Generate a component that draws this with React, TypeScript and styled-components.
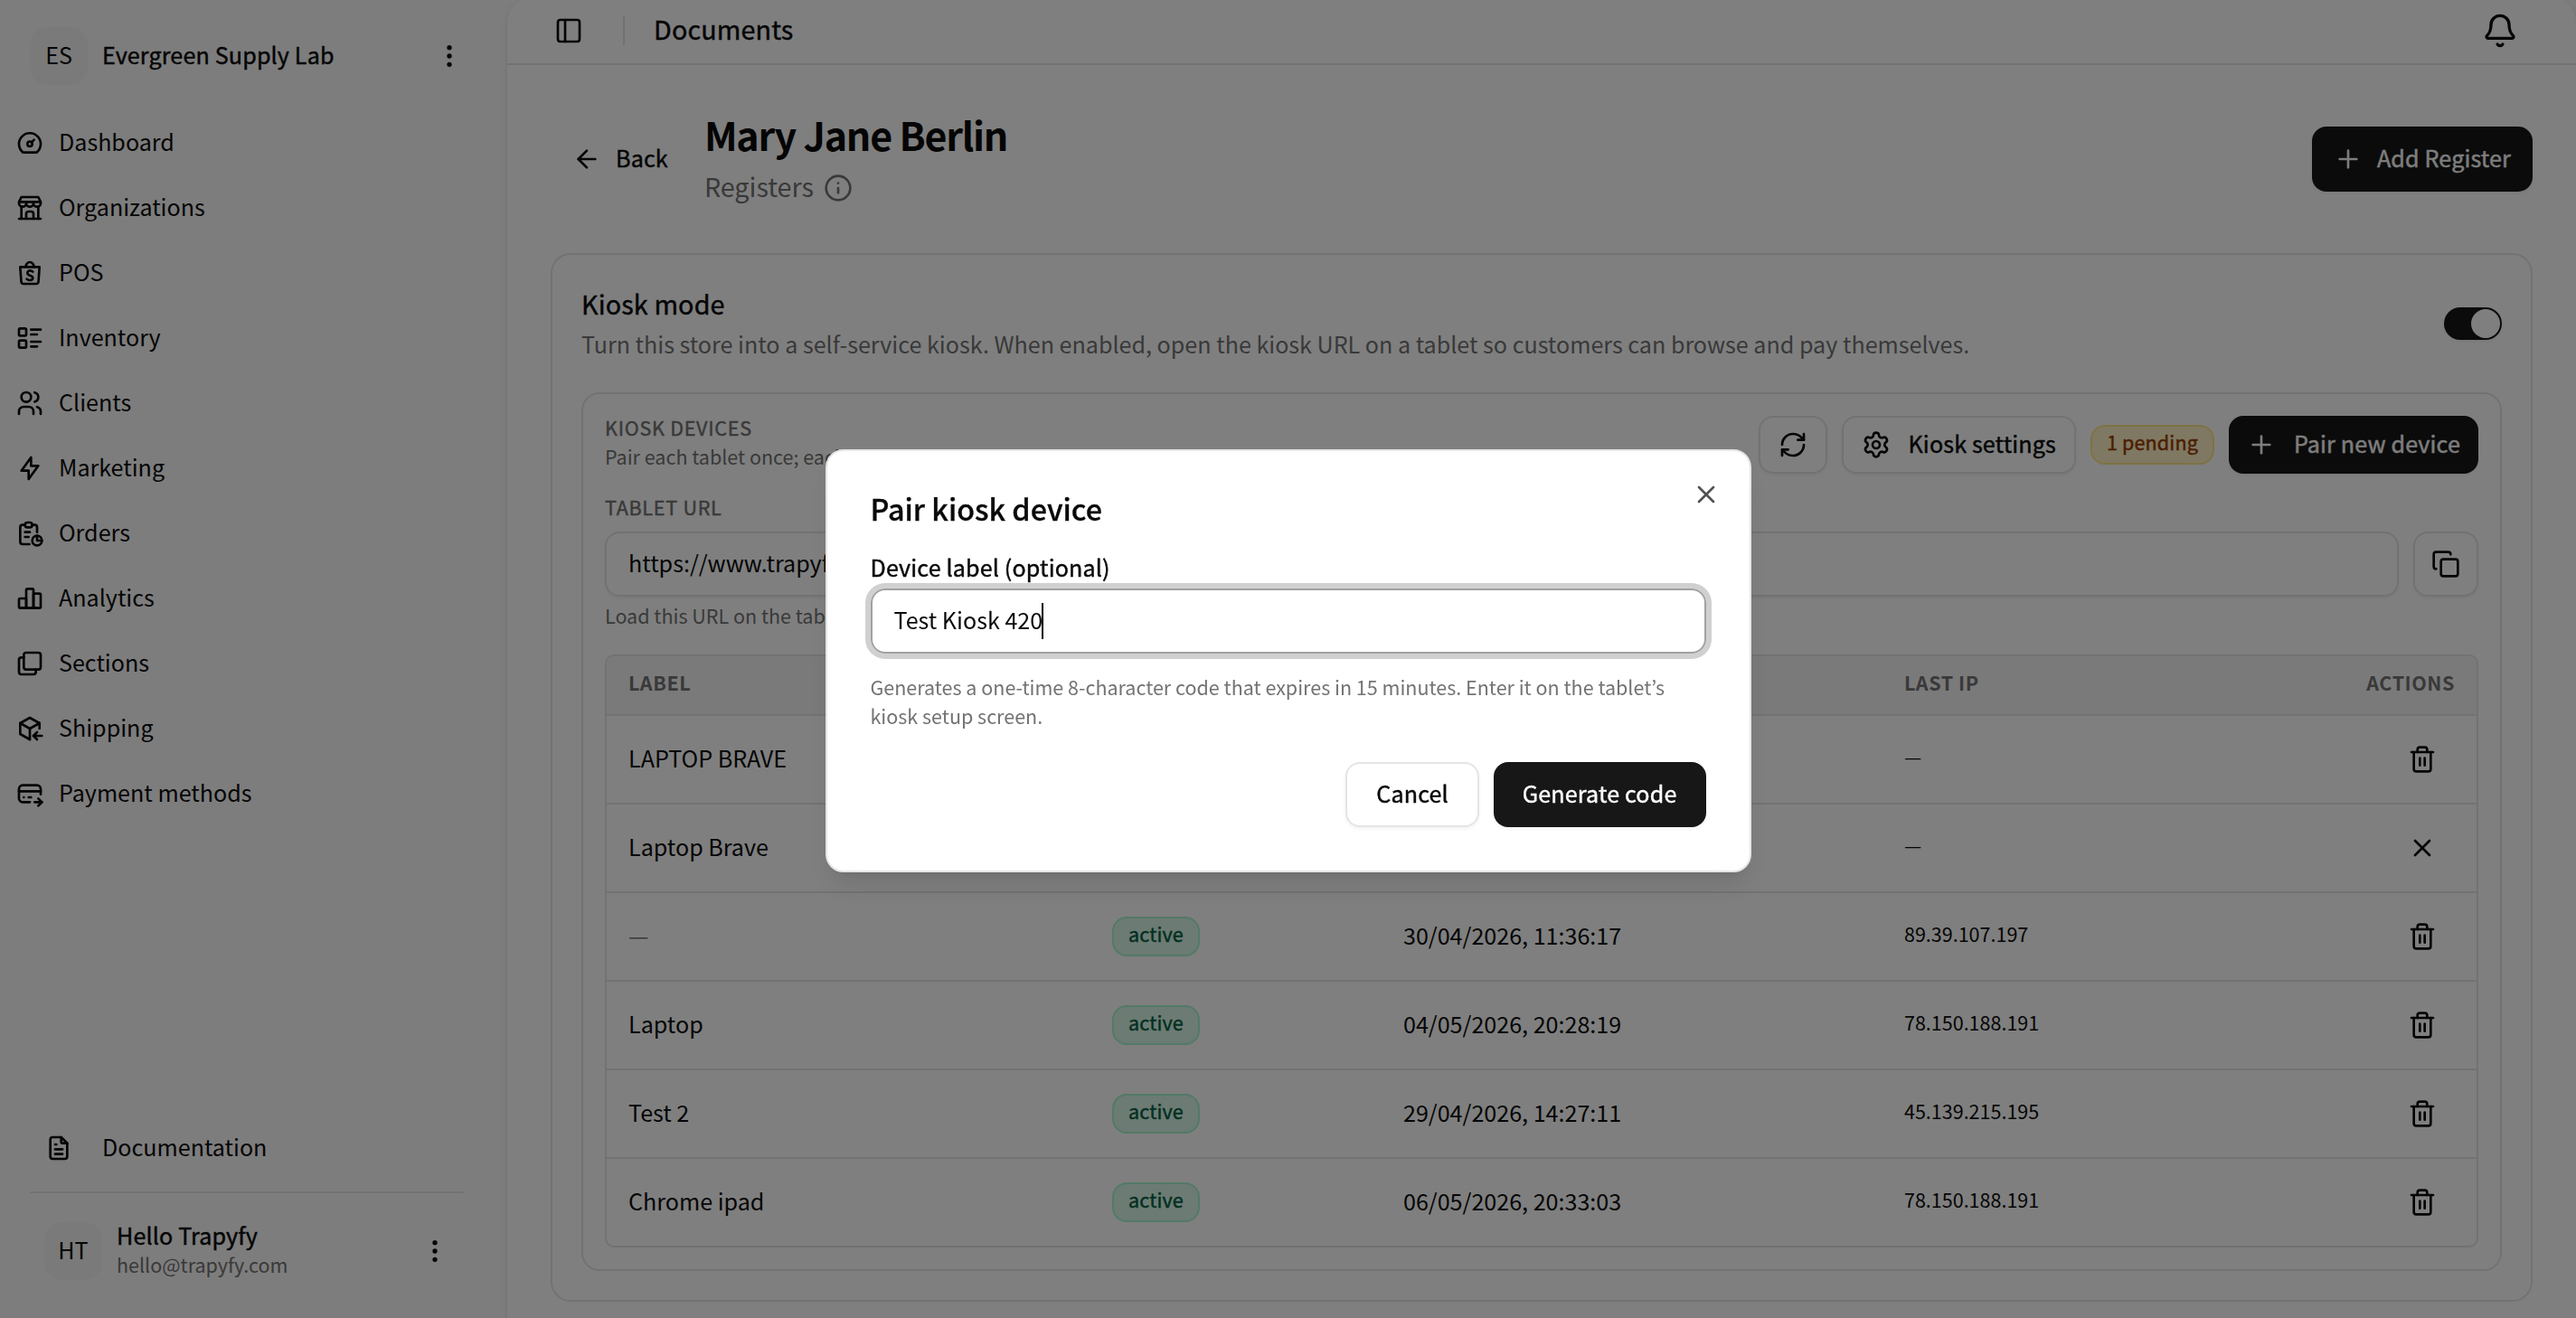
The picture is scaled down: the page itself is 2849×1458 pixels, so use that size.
import React from "react";
import styled, { createGlobalStyle, css } from "styled-components";
import {
  TbDashboard,
  TbBuildingStore,
  TbBrandShopee,
  TbListDetails,
  TbUsers,
  TbBolt,
  TbReport,
  TbChartBar,
  TbBoxMultiple,
  TbPackageImport,
  TbCreditCardPay,
  TbFileText,
} from "react-icons/tb";
import {
  ArrowLeft,
  Bell,
  Copy,
  EllipsisVertical,
  Info,
  PanelLeft,
  Plus,
  RefreshCw,
  Settings,
  Trash2,
  X,
} from "lucide-react";

const color = {
  ink: "#0a0a0a",
  muted: "#737373",
  line: "#e5e5e5",
  soft: "#f5f5f5",
  sidebar: "#fafafa",
  primary: "#171717",
  ring: "#a1a1a1",
};

const shadowXs = "0 2px 4px rgba(0, 0, 0, 0.05)";

const type = {
  xs: css`
    font-size: 21.5px;
    line-height: 26px;
    padding-bottom: 6px;
  `,
  sm: css`
    font-size: 25.1px;
    line-height: 36px;
    padding-bottom: 4px;
  `,
  base: css`
    font-size: 28.7px;
    line-height: 43px;
    padding-bottom: 5px;
  `,
};

const medium = css`
  font-weight: 400;
  letter-spacing: 0.15px;
  -webkit-text-stroke: 0.45px currentColor;
`;

const GlobalStyle = createGlobalStyle`
  *, *::before, *::after { box-sizing: border-box; }
  body {
    margin: 0;
    overflow: hidden;
    background: ${color.sidebar};
    color: ${color.ink};
    font-family: "Noto Sans CJK SC", "Open Sans", sans-serif;
  }
  button, input { font: inherit; color: inherit; }
  h1, h2, p { margin: 0; }
`;

const Shell = styled.div`
  display: flex;
  height: 1458px;
  width: 100%;
  overflow: hidden;
`;

/* Sidebar */
const Sidebar = styled.aside`
  width: 561px;
  flex: none;
  display: flex;
  flex-direction: column;
  padding: 30px 0 26px;
`;

const Workspace = styled.div`
  display: flex;
  align-items: center;
  gap: 16px;
  padding: 0 48px 0 33px;
  height: 64px;
`;

const Avatar = styled.div`
  width: 64px;
  height: 64px;
  flex: none;
  display: grid;
  place-items: center;
  border-radius: 20px;
  background: ${color.soft};
`;

const Label = styled.span<{ $medium?: boolean }>`
  ${type.sm}
  ${(p) => p.$medium && medium}
  white-space: nowrap;
`;

const Grow = styled.div`
  flex: 1;
  min-width: 0;
`;

const Nav = styled.nav`
  display: flex;
  flex-direction: column;
  gap: 8px;
  margin-top: 32px;
  padding: 0 16px;
`;

const NavItem = styled.a`
  display: flex;
  align-items: center;
  gap: 16px;
  height: 64px;
  padding-left: 1px;
  svg {
    width: 32px;
    height: 32px;
  }
`;

const SidebarFooter = styled.div`
  margin-top: auto;
  padding: 0 48px 0 33px;
`;

const DocsLink = styled.a`
  display: flex;
  align-items: center;
  gap: 32px;
  height: 64px;
  padding-left: 16px;
  svg {
    width: 32px;
    height: 32px;
  }
`;

const Separator = styled.hr`
  height: 2px;
  margin: 16px 0;
  border: 0;
  background: ${color.line};
`;

const UserRow = styled.div`
  display: flex;
  align-items: center;
  gap: 16px;
  height: 96px;
  padding: 0 16px;
`;

const UserName = styled.div`
  ${type.sm}
  ${medium}
  line-height: 31px;
`;

const UserMail = styled.div`
  ${type.xs}
  color: ${color.muted};
`;

/* Main panel */
const Panel = styled.main`
  flex: 1;
  min-width: 0;
  margin-top: -3px;
  border-radius: 28px 28px 0 0;
  background: #fff;
  box-shadow: 0 2px 6px rgba(0, 0, 0, 0.1), 0 2px 4px -2px rgba(0, 0, 0, 0.1);
`;

const TopBar = styled.header`
  display: flex;
  align-items: center;
  height: 75px;
  padding: 3px 64px 2px 52px;
  border-bottom: 2px solid ${color.line};
`;

const TopDivider = styled.span`
  width: 2px;
  height: 32px;
  margin: 0 32px 0 44px;
  background: ${color.line};
`;

const TopTitle = styled.div`
  ${type.base}
  ${medium}
`;

const Page = styled.div`
  padding: 48px;
`;

const PageHeader = styled.div`
  display: flex;
  align-items: center;
  gap: 16px;
  height: 112px;
`;

const BackButton = styled.a`
  display: flex;
  align-items: center;
  gap: 16px;
  padding: 0 24px;
`;

const PageTitle = styled.h1`
  font-size: 43px;
  font-weight: 700;
  line-height: 56px;
  padding-bottom: 8px;
  letter-spacing: -1.25px;
`;

const PageSub = styled.div`
  display: flex;
  align-items: center;
  gap: 11px;
  color: ${color.muted};
`;

const SubText = styled.span`
  ${type.base}
`;

const Button = styled.button<{ $primary?: boolean; $height?: number; $padX?: number; $gap?: number; $square?: number }>`
  display: inline-flex;
  flex: none;
  align-items: center;
  justify-content: center;
  gap: ${(p) => p.$gap ?? 16}px;
  height: ${(p) => p.$height ?? 72}px;
  width: ${(p) => (p.$square ? `${p.$square}px` : "auto")};
  padding: 0 ${(p) => (p.$square ? 0 : p.$padX ?? 24)}px;
  border: ${(p) => (p.$primary ? "0" : `2px solid ${color.line}`)};
  border-radius: 16px;
  background: ${(p) => (p.$primary ? color.primary : "#fff")};
  color: ${(p) => (p.$primary ? "#fafafa" : color.ink)};
  box-shadow: ${shadowXs};
`;

const Card = styled.section`
  margin-top: 48px;
  padding: 32px;
  border: 2px solid ${color.line};
  border-radius: 22px;
`;

const CardHeader = styled.div`
  display: flex;
  align-items: center;
  justify-content: space-between;
  height: 88px;
`;

const CardTitle = styled.h2`
  ${type.base}
  ${medium}
`;

const CardText = styled.p`
  ${type.sm}
  color: ${color.muted};
`;

const Switch = styled.span`
  display: flex;
  justify-content: flex-end;
  width: 64px;
  height: 36px;
  padding: 2px;
  border-radius: 18px;
  background: ${color.primary};
  box-shadow: ${shadowXs};
`;

const Thumb = styled.span`
  width: 32px;
  height: 32px;
  border-radius: 50%;
  background: #fff;
`;

const Devices = styled.div`
  margin-top: 32px;
  padding: 24px;
  border: 2px solid ${color.line};
  border-radius: 20px;
`;

const DevicesHeader = styled.div`
  display: flex;
  align-items: center;
  gap: 16px;
  height: 64px;
`;

const Overline = styled.div`
  ${type.xs}
  ${medium}
  letter-spacing: 0.75px;
  text-transform: uppercase;
  color: ${color.muted};
`;

const Hint = styled.p`
  ${type.xs}
  color: ${color.muted};
`;

const tones = {
  amber: { bg: "#fef3c6", line: "#fde585", text: "#973c00" },
  green: { bg: "#d8f7e7", line: "#a4f4cf", text: "#065f46" },
};

const Badge = styled.span<{ $tone: keyof typeof tones }>`
  display: inline-flex;
  align-items: center;
  height: 44px;
  padding: 0 16px;
  border: 2px solid ${(p) => tones[p.$tone].line};
  border-radius: 16px;
  background: ${(p) => tones[p.$tone].bg};
  color: ${(p) => tones[p.$tone].text};
`;

const BadgeText = styled.span`
  ${type.xs}
  ${medium}
  white-space: nowrap;
`;

const UrlBlock = styled.div`
  display: flex;
  flex-direction: column;
  gap: 8px;
  margin: 24px 0;
`;

const UrlRow = styled.div`
  display: flex;
  gap: 16px;
`;

const Field = styled.div<{ $focused?: boolean }>`
  display: flex;
  align-items: center;
  flex: 1;
  height: 72px;
  padding: 0 24px;
  border: 2px solid ${(p) => (p.$focused ? color.ring : color.line)};
  border-radius: 16px;
  box-shadow: ${(p) => (p.$focused ? "0 0 0 6px rgba(161, 161, 161, 0.5)" : shadowXs)};
`;

const Caret = styled.span`
  width: 2px;
  height: 40px;
  margin-left: -1px;
  background: #000;
`;

const Table = styled.div`
  border: 2px solid ${color.line};
  border-radius: 10px;
  overflow: hidden;
`;

const Row = styled.div<{ $head?: boolean }>`
  display: grid;
  grid-template-columns: 535px 322px 554px 1fr 200px;
  align-items: center;
  height: ${(p) => (p.$head ? 66 : 98)}px;
  border-bottom: 2px solid ${color.line};
  background: ${(p) => (p.$head ? color.soft : "transparent")};
  &:last-child {
    height: 96px;
    border-bottom: 0;
  }
`;

const Cell = styled.div<{ $end?: boolean }>`
  display: flex;
  justify-content: ${(p) => (p.$end ? "flex-end" : "flex-start")};
  padding: 0 24px;
`;

const HeadText = styled.span`
  ${type.xs}
  font-weight: 700;
  letter-spacing: 0.55px;
  text-transform: uppercase;
  color: ${color.muted};
`;

const CellText = styled.span<{ $muted?: boolean }>`
  ${type.sm}
  color: ${(p) => (p.$muted ? color.muted : color.ink)};
`;

const IpText = styled.span`
  ${type.xs}
`;

const IconSlot = styled.span`
  display: grid;
  place-items: center;
  width: 72px;
  height: 64px;
`;

/* Dialog */
const Overlay = styled.div`
  position: fixed;
  inset: 0;
  display: flex;
  justify-content: center;
  align-items: flex-start;
  padding-top: 497px;
  background: rgba(0, 0, 0, 0.5);
`;

const Dialog = styled.div`
  position: relative;
  width: 1024px;
  height: 468px;
  padding: 48px;
  border: 2px solid ${color.line};
  border-radius: 20px;
  background: #fff;
  box-shadow: 0 20px 30px -6px rgba(0, 0, 0, 0.1), 0 8px 12px -8px rgba(0, 0, 0, 0.1);
`;

const CloseIcon = styled.span`
  position: absolute;
  top: 32px;
  right: 32px;
  display: grid;
  opacity: 0.7;
`;

const DialogTitle = styled.h2`
  font-size: 32.3px;
  font-weight: 500;
  line-height: 30px;
  padding-bottom: 6px;
  -webkit-text-stroke: 0.3px currentColor;
`;

const DialogLabel = styled.div`
  font-size: 25.1px;
  ${medium}
  line-height: 24px;
  padding-bottom: 4px;
  margin: 32px 0 8px;
`;

const DialogHint = styled.p`
  height: 64px;
  margin: 21px 0 35px;
  font-family: "Noto Sans CJK KR", "Open Sans", sans-serif;
  font-size: 21.5px;
  line-height: 32px;
  color: ${color.muted};
`;

const DialogActions = styled.div`
  display: flex;
  justify-content: flex-end;
  gap: 16px;
`;

const navItems = [
  { icon: TbDashboard, label: "Dashboard" },
  { icon: TbBuildingStore, label: "Organizations" },
  { icon: TbBrandShopee, label: "POS" },
  { icon: TbListDetails, label: "Inventory" },
  { icon: TbUsers, label: "Clients" },
  { icon: TbBolt, label: "Marketing" },
  { icon: TbReport, label: "Orders" },
  { icon: TbChartBar, label: "Analytics" },
  { icon: TbBoxMultiple, label: "Sections" },
  { icon: TbPackageImport, label: "Shipping" },
  { icon: TbCreditCardPay, label: "Payment methods" },
];

type Device = { label: string; status?: "active"; seen?: string; ip: string; pending?: boolean };

const devices: Device[] = [
  { label: "LAPTOP BRAVE", ip: "—" },
  { label: "Laptop Brave", ip: "—", pending: true },
  { label: "—", status: "active", seen: "30/04/2026, 11:36:17", ip: "89.39.107.197" },
  { label: "Laptop", status: "active", seen: "04/05/2026, 20:28:19", ip: "78.150.188.191" },
  { label: "Test 2", status: "active", seen: "29/04/2026, 14:27:11", ip: "45.139.215.195" },
  { label: "Chrome ipad", status: "active", seen: "06/05/2026, 20:33:03", ip: "78.150.188.191" },
];

function AppSidebar() {
  return (
    <Sidebar>
      <Workspace>
        <Avatar>
          <Label>ES</Label>
        </Avatar>
        <Grow>
          <Label as="div" $medium>Evergreen Supply Lab</Label>
        </Grow>
        <EllipsisVertical size={32} />
      </Workspace>
      <Nav>
        {navItems.map(({ icon: Icon, label }) => (
          <NavItem key={label}>
            <Icon />
            <Label>{label}</Label>
          </NavItem>
        ))}
      </Nav>
      <SidebarFooter>
        <DocsLink>
          <TbFileText />
          <Label>Documentation</Label>
        </DocsLink>
        <Separator />
        <UserRow>
          <Avatar>
            <Label>HT</Label>
          </Avatar>
          <Grow>
            <UserName>Hello Trapyfy</UserName>
            <UserMail>hello@trapyfy.com</UserMail>
          </Grow>
          <EllipsisVertical size={32} />
        </UserRow>
      </SidebarFooter>
    </Sidebar>
  );
}

function DeviceTable() {
  return (
    <Table>
      <Row $head>
        <Cell><HeadText>Label</HeadText></Cell>
        <Cell />
        <Cell />
        <Cell><HeadText>Last IP</HeadText></Cell>
        <Cell $end><HeadText>Actions</HeadText></Cell>
      </Row>
      {devices.map((d, i) => (
        <Row key={i}>
          <Cell><CellText $muted={d.label === "—"}>{d.label}</CellText></Cell>
          <Cell>
            {d.status && (
              <Badge $tone="green">
                <BadgeText>{d.status}</BadgeText>
              </Badge>
            )}
          </Cell>
          <Cell><CellText>{d.seen}</CellText></Cell>
          <Cell><IpText>{d.ip}</IpText></Cell>
          <Cell $end>
            <IconSlot>{d.pending ? <X size={32} /> : <Trash2 size={32} />}</IconSlot>
          </Cell>
        </Row>
      ))}
    </Table>
  );
}

function KioskCard() {
  return (
    <Card>
      <CardHeader>
        <div>
          <CardTitle>Kiosk mode</CardTitle>
          <CardText>
            Turn this store into a self-service kiosk. When enabled, open the kiosk URL on a tablet so customers can
            browse and pay themselves.
          </CardText>
        </div>
        <Switch><Thumb /></Switch>
      </CardHeader>
      <Devices>
        <DevicesHeader>
          <Grow>
            <Overline>Kiosk devices</Overline>
            <Hint>Pair each tablet once; each device</Hint>
          </Grow>
          <Button $height={64} $square={76}><RefreshCw size={32} /></Button>
          <Button $height={64} $padX={20} $gap={20}>
            <Settings size={32} />
            <Label $medium>Kiosk settings</Label>
          </Button>
          <Badge $tone="amber"><BadgeText>1 pending</BadgeText></Badge>
          <Button $primary $height={64} $padX={20} $gap={20}>
            <Plus size={32} />
            <Label $medium>Pair new device</Label>
          </Button>
        </DevicesHeader>
        <UrlBlock>
          <Overline>Tablet URL</Overline>
          <UrlRow>
            <Field><Label>https://www.trapyfy.com</Label></Field>
            <Button $square={72}><Copy size={32} /></Button>
          </UrlRow>
          <Hint>Load this URL on the tablet.</Hint>
        </UrlBlock>
        <DeviceTable />
      </Devices>
    </Card>
  );
}

function PairDialog() {
  return (
    <Overlay>
      <Dialog role="dialog">
        <CloseIcon><X size={32} /></CloseIcon>
        <DialogTitle>Pair kiosk device</DialogTitle>
        <DialogLabel>Device label (optional)</DialogLabel>
        <Field $focused>
          <Label>Test Kiosk 420</Label>
          <Caret />
        </Field>
        <DialogHint>
          Generates a one-time 8-character code that expires in 15 minutes. Enter it on the tablet’s kiosk setup screen.
        </DialogHint>
        <DialogActions>
          <Button $padX={32}><Label $medium>Cancel</Label></Button>
          <Button $primary $padX={32}><Label $medium>Generate code</Label></Button>
        </DialogActions>
      </Dialog>
    </Overlay>
  );
}

export default function App() {
  return (
    <>
      <GlobalStyle />
      <Shell>
        <AppSidebar />
        <Panel>
          <TopBar>
            <PanelLeft size={32} />
            <TopDivider />
            <Grow><TopTitle>Documents</TopTitle></Grow>
            <Bell size={40} />
          </TopBar>
          <Page>
            <PageHeader>
              <BackButton>
                <ArrowLeft size={32} />
                <Label $medium>Back</Label>
              </BackButton>
              <Grow>
                <PageTitle>Mary Jane Berlin</PageTitle>
                <PageSub>
                  <SubText>Registers</SubText>
                  <Info size={32} />
                </PageSub>
              </Grow>
              <Button $primary>
                <Plus size={32} />
                <Label $medium>Add Register</Label>
              </Button>
            </PageHeader>
            <KioskCard />
          </Page>
        </Panel>
      </Shell>
      <PairDialog />
    </>
  );
}
